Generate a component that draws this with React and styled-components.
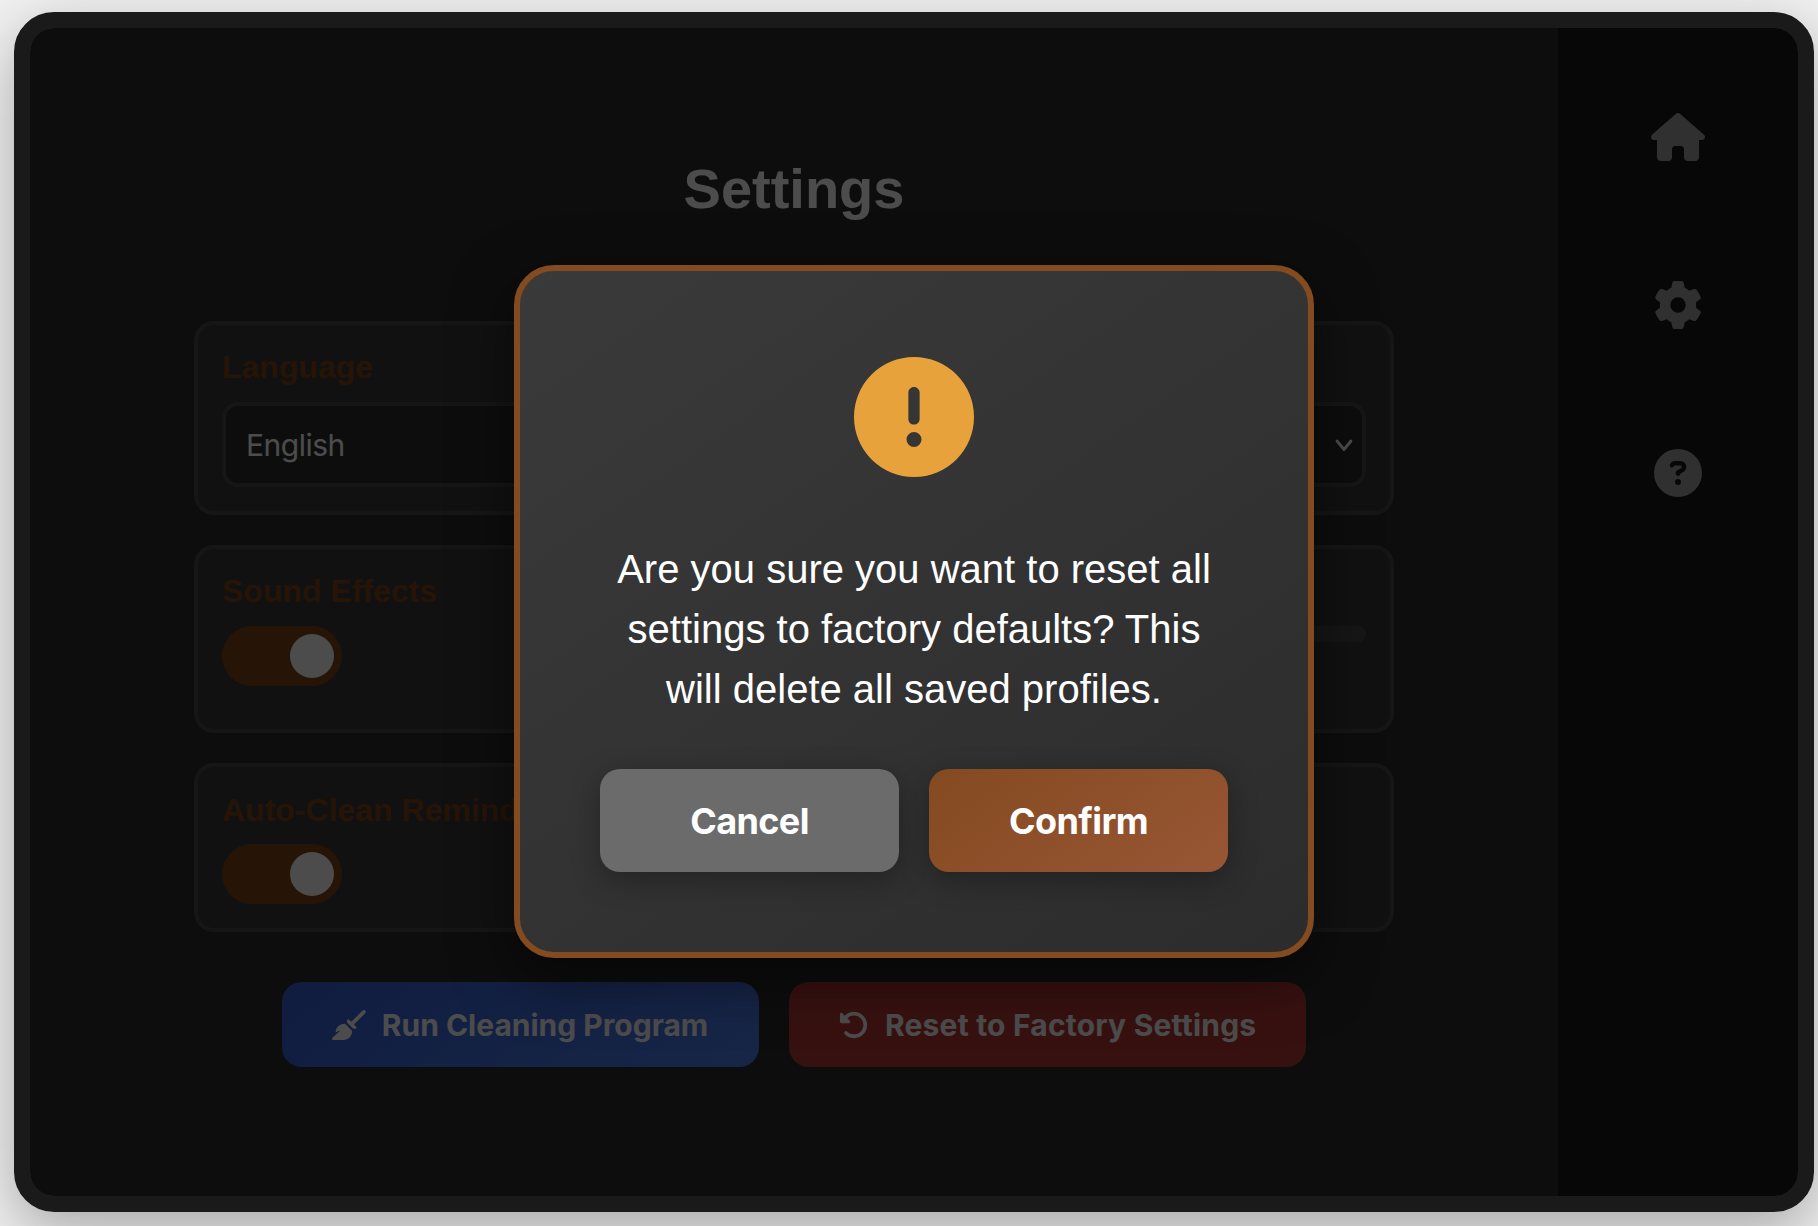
import React from "react";
import styled, { createGlobalStyle } from "styled-components";
import {
  FaHouse,
  FaCircleQuestion,
  FaBroom,
  FaRotateLeft,
  FaCircleExclamation,
} from "react-icons/fa6";

const GlobalStyle = createGlobalStyle`
  *, *::before, *::after { box-sizing: border-box; }
  html, body { margin: 0; height: 1226px; overflow: hidden; }
  body {
    background: #f0f0f0;
    font-family: "Liberation Sans", Arial, sans-serif;
    color: #fff;
  }
  button { font-family: Inter, sans-serif; }
`;

const Stage = styled.main`
  padding: 12px 0 0 14px;
`;

const Device = styled.div`
  position: relative;
  display: flex;
  width: 1800px;
  height: 1200px;
  border: 16px solid #1a1a1a;
  border-radius: 40px;
  background: #2c2c2c;
  overflow: hidden;
`;

const DeviceShadow = styled.div`
  width: 1800px;
  border-radius: 40px;
  box-shadow: 0 20px 60px rgba(0, 0, 0, 0.3);
`;

const Content = styled.section`
  flex: 1;
  display: flex;
  flex-direction: column;
  align-items: center;
  padding-top: 129px;
`;

const Title = styled.h1`
  margin: 0 0 100px;
  font-size: 56px;
  line-height: 64px;
  font-weight: 700;
`;

const Cards = styled.div`
  display: flex;
  flex-direction: column;
  gap: 30px;
  width: 1200px;
`;

const Card = styled.div`
  display: flex;
  gap: 40px;
  height: ${(p) => p.$height}px;
  padding: 24px;
  border: 4px solid #4a4a4a;
  border-radius: 20px;
  background: #3a3a3a;
`;

const Field = styled.div`
  flex: 1;
`;

const Label = styled.div`
  height: 53px;
  font-size: 32px;
  line-height: ${(p) => p.$line || 37}px;
  font-weight: 700;
  color: #7f4519;
  white-space: nowrap;
`;

const Select = styled.div`
  display: flex;
  align-items: center;
  justify-content: space-between;
  height: 85px;
  padding: 0 7px 0 20px;
  border: 4px solid #4a4a4a;
  border-radius: 16px;
  background: #2c2c2c;
  font: 400 30px/36px Inter, sans-serif;
  letter-spacing: -0.5px;
`;

const Toggle = styled.div`
  display: flex;
  align-items: center;
  justify-content: flex-end;
  width: 120px;
  height: 60px;
  padding: 8px;
  border-radius: 30px;
  background: #7f4519;
`;

const Knob = styled.span`
  width: 44px;
  height: 44px;
  border-radius: 50%;
  background: #fff;
`;

const Slider = styled.div`
  height: 16px;
  border-radius: 8px;
  background: #4a4a4a;
`;

const Actions = styled.div`
  display: flex;
  gap: 30px;
  margin-top: 50px;
`;

const ActionButton = styled.button`
  display: flex;
  align-items: center;
  gap: 16px;
  width: ${(p) => p.$width}px;
  height: 85px;
  padding: 0 50px;
  border: 0;
  border-radius: 20px;
  background: ${(p) => p.$fill};
  color: #fff;
  font-size: 30px;
  font-weight: 700;
  letter-spacing: ${(p) => p.$tracking}px;
  white-space: nowrap;
  svg {
    flex: none;
    width: ${(p) => p.$iconWidth}px;
    height: 30px;
  }
`;

const Sidebar = styled.nav`
  display: flex;
  flex-direction: column;
  align-items: center;
  gap: 120px;
  width: 240px;
  padding-top: 85px;
  background: #1a1a1a;
  color: #a0a0a0;
  svg { display: block; width: 54px; height: 48px; }
`;

const Overlay = styled.div`
  position: absolute;
  inset: 0;
  display: flex;
  align-items: center;
  justify-content: center;
  border-radius: 24px;
  background: rgba(0, 0, 0, 0.7);
`;

const Dialog = styled.div`
  display: flex;
  flex-direction: column;
  align-items: center;
  width: 800px;
  height: 693px;
  margin-bottom: 1px;
  padding: 80px;
  border: 6px solid #844a20;
  border-radius: 40px;
  background: linear-gradient(145deg, #3a3a3a, #2c2c2c);
  box-shadow: 0 20px 60px rgba(0, 0, 0, 0.5);
`;

const WarningIcon = styled(FaCircleExclamation)`
  display: block;
  margin-top: 6px;
  font-size: 120px;
  color: #e8a23c;
`;

const Message = styled.p`
  margin: 62px 0 50px;
  font-size: 40px;
  line-height: 60px;
  text-align: center;
`;

const DialogActions = styled.div`
  display: flex;
  gap: 30px;
  width: 100%;
`;

const DialogButton = styled.button`
  flex: 1;
  height: 103px;
  border: 0;
  border-radius: 20px;
  background: ${(p) => p.$fill};
  box-shadow: 0 8px 30px rgba(0, 0, 0, 0.3);
  color: #fff;
  font-size: 36px;
  font-weight: 700;
  letter-spacing: -0.6px;
`;

const Chevron = () => (
  <svg width="22" height="16" viewBox="0 0 22 16" fill="none">
    <path d="M4 4L11 12.5L18 4" stroke="#fff" strokeWidth="2.8" strokeLinecap="round" strokeLinejoin="round" />
  </svg>
);

const Gear = () => (
  <svg viewBox="-72 -72 144 144" fill="currentColor">
    <path
      fillRule="evenodd"
      d="M-11 -72H11Q16 -72 17 -67L20 -52Q27 -49 34 -43L48 -48Q53 -49 56 -45Q64 -34 68 -24Q69 -20 66 -17L54 -8Q55 0 54 8L66 17Q69 20 68 24Q64 34 56 45Q53 49 48 48L34 43Q27 49 20 52L17 67Q16 72 11 72H-11Q-16 72 -17 67L-20 52Q-27 49 -34 43L-48 48Q-53 49 -56 45Q-64 34 -68 24Q-69 20 -66 17L-54 8Q-55 0 -54 -8L-66 -17Q-69 -20 -68 -24Q-64 -34 -56 -45Q-53 -49 -48 -48L-34 -43Q-27 -49 -20 -52L-17 -67Q-16 -72 -11 -72ZM0 -23A23 23 0 1 0 0 23A23 23 0 1 0 0 -23Z"
    />
  </svg>
);

export default function App() {
  return (
    <Stage>
      <GlobalStyle />
      <DeviceShadow>
        <Device>
          <Content>
            <Title>Settings</Title>
            <Cards>
              <Card $height={194}>
                <Field>
                  <Label>Language</Label>
                  <Select>
                    English
                    <Chevron />
                  </Select>
                </Field>
              </Card>
              <Card $height={188}>
                <Field>
                  <Label>Sound Effects</Label>
                  <Toggle><Knob /></Toggle>
                </Field>
                <Field>
                  <Label />
                  <Slider />
                </Field>
              </Card>
              <Card $height={169}>
                <Field>
                  <Label $line={39}>Auto-Clean Reminder</Label>
                  <Toggle><Knob /></Toggle>
                </Field>
              </Card>
            </Cards>
            <Actions>
              <ActionButton $width={477} $iconWidth={33.75} $tracking={0} $fill="linear-gradient(145deg, #3560d8, #4f80ee)">
                <FaBroom />
                Run Cleaning Program
              </ActionButton>
              <ActionButton $width={517} $iconWidth={30} $tracking={0.2} $fill="#b83a36">
                <FaRotateLeft />
                Reset to Factory Settings
              </ActionButton>
            </Actions>
          </Content>
          <Sidebar>
            <FaHouse />
            <Gear />
            <FaCircleQuestion />
          </Sidebar>
          <Overlay>
            <Dialog role="dialog">
              <WarningIcon />
              <Message>
                Are you sure you want to reset all settings to factory defaults? This will delete all saved profiles.
              </Message>
              <DialogActions>
                <DialogButton $fill="#6b6b6b">Cancel</DialogButton>
                <DialogButton $fill="linear-gradient(145deg, #844a20, #985635)">Confirm</DialogButton>
              </DialogActions>
            </Dialog>
          </Overlay>
        </Device>
      </DeviceShadow>
    </Stage>
  );
}
